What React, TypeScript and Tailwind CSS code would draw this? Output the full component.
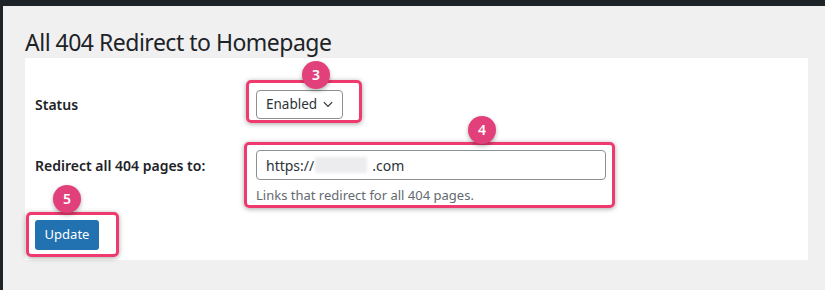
import React from "react";

const font = { fontFamily: '"Noto Sans", "Open Sans", "Liberation Sans", sans-serif' };

function Badge({ n, className }: { n: string; className: string }) {
  return (
    <span
      className={`absolute flex h-[28px] w-[28px] items-center justify-center rounded-full bg-[#e1407a] text-[14px] font-semibold leading-none text-white shadow-[0_2px_4px_rgba(0,0,0,0.3)] ${className}`}
    >
      {n}
    </span>
  );
}

function Marker({ className, badge, badgeClass }: { className: string; badge: string; badgeClass: string }) {
  return (
    <div
      className={`pointer-events-none absolute rounded-[5px] border-[3px] border-[#ee3a6e] shadow-[0_1px_5px_rgba(0,0,0,0.35)] ${className}`}
    >
      <Badge n={badge} className={badgeClass} />
    </div>
  );
}

export default function App() {
  return (
    <div
      className="flex h-[290px] w-[825px] flex-col overflow-hidden bg-[#f0f0f1] text-[#1d2327]"
      style={font}
    >
      <div className="h-[6px] shrink-0 bg-[#1d2327]" />
      <div className="flex flex-1">
        <div className="w-[3px] shrink-0 bg-[#1d2327]" />
        <div className="flex-1 pl-[22px]">
          <h1 className="mt-[20px] h-[32px] text-[23px] font-normal leading-[32px] tracking-[-0.5px]">
            All 404 Redirect to Homepage
          </h1>
          <div className="h-[202px] w-[783px] bg-white px-[10px]">
            <div className="flex h-[92px] items-center">
              <div className="flex w-[221px] items-center">
                <span className="text-[14px] font-semibold">Status</span>
              </div>
              <div className="relative">
                <div className="flex h-[29px] w-[87px] items-center justify-between rounded-[4px] border border-[#8c8f94] pl-[9px] pr-[8px] text-[13.5px] text-[#2c3338]">
                  <span>Enabled</span>
                  <svg width="12" height="12" viewBox="0 0 20 20" fill="none">
                    <path d="M3 7l7 7 7-7" stroke="#2c3338" strokeWidth="2" />
                  </svg>
                </div>
                <Marker
                  className="-left-[10px] -top-[10px] -right-[19px] -bottom-[4px]"
                  badge="3"
                  badgeClass="left-[53px] -top-[22px]"
                />
              </div>
            </div>
            <div className="flex items-start">
              <div className="flex h-[30px] w-[221px] items-center">
                <span className="text-[14px] font-semibold">Redirect all 404 pages to:</span>
              </div>
              <div className="relative">
                <div className="flex h-[30px] w-[350px] items-center rounded-[4px] border border-[#8c8f94] px-[9px] text-[14px] text-[#2c3338]">
                  <span>https://</span>
                  <span className="mx-[1px] h-[16px] w-[52px] bg-[#ececee] blur-[1.5px]" />
                  <span className="ml-[4px]">.com</span>
                </div>
                <p className="mt-[5px] text-[13px] leading-[20px] text-[#646970]">
                  Links that redirect for all 404 pages.
                </p>
                <Marker
                  className="-left-[12px] -top-[8px] -right-[9px] -bottom-[3px]"
                  badge="4"
                  badgeClass="left-[221px] -top-[29px]"
                />
              </div>
            </div>
            <div className="relative mt-[15px] inline-block">
              <button className="flex h-[30px] w-[64px] items-center justify-center rounded-[3px] bg-[#2271b1] text-[13px] text-white">
                Update
              </button>
              <Marker
                className="-left-[9px] -top-[8px] -right-[20px] -bottom-[7px]"
                badge="5"
                badgeClass="left-[24px] -top-[30px]"
              />
            </div>
          </div>
        </div>
      </div>
    </div>
  );
}
